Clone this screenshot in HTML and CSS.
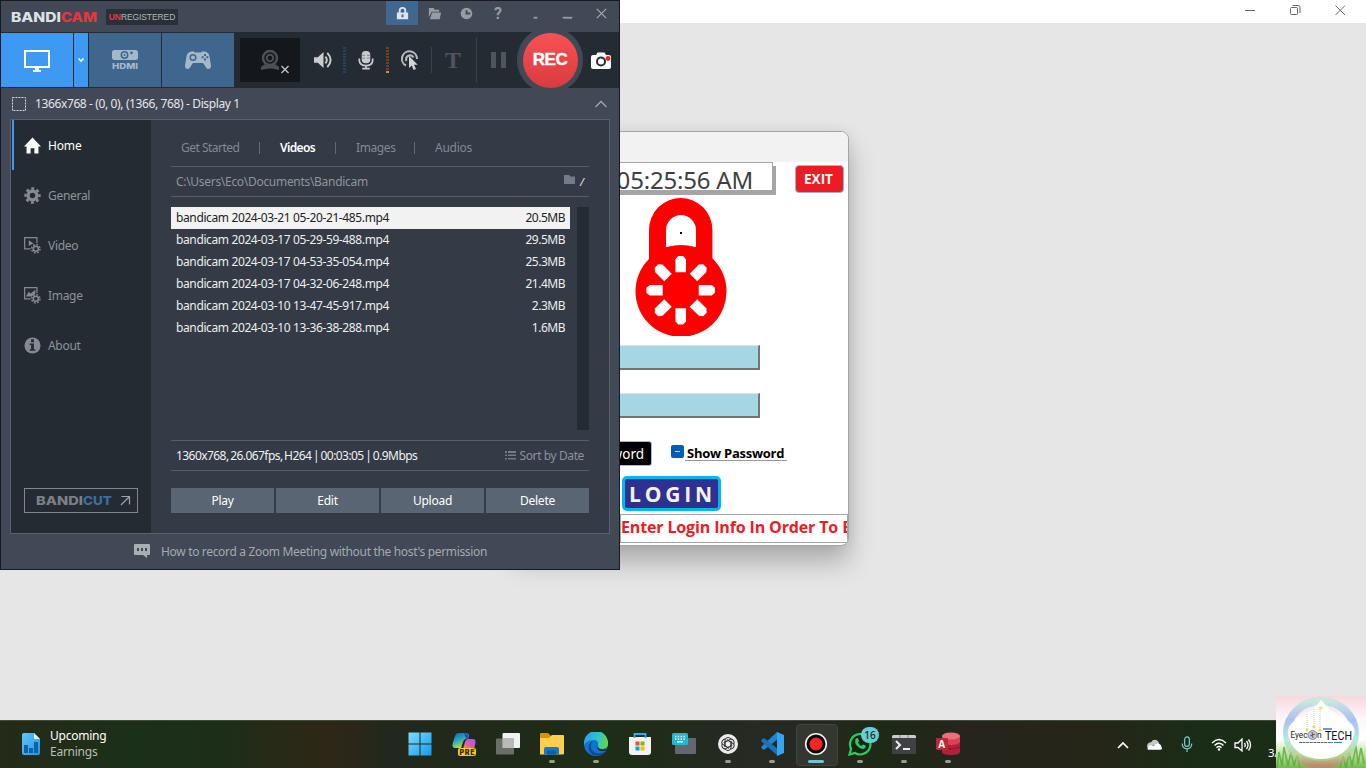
FILE: index.html
```html
<!DOCTYPE html>
<html lang="en">
<head>
<meta charset="utf-8">
<title>Desktop</title>
<link rel="stylesheet" href="styles.css">
</head>
<body>
<div class="desktop">
  <header class="app-bar">
    <svg class="app-ctl" viewBox="0 0 16 16"><path d="M3 8.500h10"/></svg>
    <svg class="app-ctl" viewBox="0 0 16 16"><rect x="3.500" y="5.500" width="7" height="7" rx="1"/><path d="M5.500 3.500h5.500a2 2 0 0 1 2 2v5.500"/></svg>
    <svg class="app-ctl" viewBox="0 0 16 16"><path d="M3.500 3.500l9.500 9.500M13 3.500L3.500 13"/></svg>
  </header>
  <main class="workspace"></main>

  <section class="login">
    <div class="login-title"></div>
    <div class="login-top">
      <div class="clock">05:25:56 AM</div>
      <button class="exit">EXIT</button>
    </div>
    <svg class="padlock" viewBox="0 0 92 138">
      <path fill="red" fill-rule="evenodd" d="M14 75V32a31.700 32 0 0 1 63.400 0V75zM31 49.500V32.500a15 15.500 0 0 1 30 0V49.500Q46 45 31 49.500z"/>
      <path fill="red" d="M31 49.300Q46 45 61 49.300L78 61A45.500 45.500 0 1 1 14 61z"/>
      <g fill="#fff" transform="translate(45.700 92.200)">
        <path id="s" d="M-5.300-18V-31L-2.500-34.300H2.500L5.300-31V-18z"/>
        <use href="#s" transform="rotate(45)"/><use href="#s" transform="rotate(90)"/><use href="#s" transform="rotate(135)"/><use href="#s" transform="rotate(180)"/><use href="#s" transform="rotate(225)"/><use href="#s" transform="rotate(270)"/><use href="#s" transform="rotate(315)"/>
      </g>
      <rect x="45" y="34" width="2" height="2" fill="#000"/>
    </svg>
    <div class="field"></div>
    <div class="field field-b"></div>
    <div class="login-opts">
      <button class="forgot">word</button>
      <span class="check"></span>
      <span class="show">Show Password</span>
    </div>
    <button class="login-btn">LOGIN</button>
    <div class="marquee">Enter Login Info In Order To E</div>
  </section>

  <section class="bandi">
    <div class="b-title">
      <svg class="b-logo" viewBox="0 0 88 16"><text x="0" y="14" textLength="50" lengthAdjust="spacingAndGlyphs" fill="#dfe2e4">BANDI</text><text x="50" y="14" textLength="36" lengthAdjust="spacingAndGlyphs" fill="#e8373c">CAM</text></svg>
      <span class="unreg"><b>UN</b>REGISTERED</span>
      <div class="b-ctls">
        <span class="b-ctl on"><svg viewBox="0 0 16 16"><path fill="#dce4ec" fill-rule="evenodd" d="M2 7h2V5a4 4 0 0 1 8 0v2h2v7H2zM6 7h4V5a2 2 0 0 0-4 0zM7 9v3h2V9z"/></svg></span>
        <span class="b-ctl"><svg viewBox="0 0 16 16"><path d="M2 12V2h5l1.500 2H13v2H5zM5.500 7H15l-1.500 7H3z"/></svg></span>
        <span class="b-ctl"><svg viewBox="0 0 16 16"><circle cx="8" cy="8" r="6.200"/><path d="M8 4.500V8h4" fill="none" stroke="#404955" stroke-width="2"/></svg></span>
        <span class="b-ctl help">?</span>
        <span class="b-ctl dot"><svg viewBox="0 0 16 16"><path d="M6 11.500h4v2H6z"/></svg></span>
        <span class="b-ctl"><svg viewBox="0 0 16 16"><path d="M3 11.500h10v2H3z"/></svg></span>
        <span class="b-ctl close"><svg viewBox="0 0 16 16"><path d="M3 3l10 10M13 3L3 13" fill="none" stroke="#a4a9af" stroke-width="1.300"/></svg></span>
      </div>
    </div>

    <div class="b-tools">
      <div class="mode active"><svg width="28" height="24" viewBox="0 0 28 24"><path fill="none" stroke="#fff" stroke-width="2" d="M2 3h24v16H2z"/><path fill="#fff" d="M12 20h4v2h2v2h-8v-2h2z"/></svg></div>
      <div class="mode drop"><svg width="8" height="8" viewBox="0 0 8 8"><path d="M1.500 2.500L4 5l2.500-2.500" fill="none" stroke="#fff" stroke-width="1.600"/></svg></div>
      <div class="mode"><svg width="28" height="20" viewBox="0 0 28 20"><rect x="1" y="0" width="26" height="10" rx="2.500" fill="#a5b8ca"/><circle cx="13.500" cy="5" r="3.200" fill="#a5b8ca" stroke="#3f668d" stroke-width="1.500"/><circle cx="13.500" cy="5" r="1" fill="#3f668d"/><circle cx="20.500" cy="2.800" r="1.400" fill="#3f668d"/><text class="hdmi" x="1" y="18.500" textLength="26" lengthAdjust="spacingAndGlyphs">HDMI</text></svg></div>
      <div class="mode"><svg width="28" height="20" viewBox="0 0 28 20"><path fill="#a5b8ca" d="M7 1.500h3l1 1h6l1-1h3q4 1 4.500 5l1.500 9q0 3.500-3 3.500-1.500 0-3.500-4l-1.500-2H9l-1.500 2q-2 4-3.500 4-3 0-3-3.500l1.500-9q.5-4 4.500-5z"/><circle cx="9" cy="7.500" r="2.800" fill="none" stroke="#3f668d" stroke-width="1.500"/><path fill="#3f668d" d="M20 4h2v2h-2zM20 8.500h2v2h-2zM17.700 6.200h2v2h-2zM22.300 6.200h2v2h-2z"/></svg></div>
      <div class="cam"><svg width="60" height="44" viewBox="0 0 60 44"><g fill="none" stroke="#4d5155"><circle cx="30" cy="20" r="7" stroke-width="2.500"/><circle cx="30" cy="20" r="3.200" stroke-width="2"/></g><path fill="#4d5155" d="M25 26q5 3 10 0l4 3v3q-9-3-18 0v-3z"/><path d="M41.500 28l7 7M48.500 28l-7 7" stroke="#c4c6c8" stroke-width="1.300"/></svg></div>
      <svg class="t-speaker" viewBox="0 0 20 18"><path fill="#c9cccf" d="M0 6h4l6-5.500v17L4 12H0z"/><path d="M12 5.500q3 3.500 0 7M14 1.500q7 7.500 0 15" fill="none" stroke="#c9cccf" stroke-width="2"/></svg>
      <span class="meter"></span>
      <svg class="t-mic" viewBox="0 0 16 20"><rect x="3.500" y="0" width="9" height="13" rx="4" fill="#c9cccf"/><path d="M4 4.500h3M9 4.500h3M4 7.500h3M9 7.500h3" stroke="#7b8086"/><path d="M1 8v2.500q1 5 7 5t7-5V8M8 15v3M4 18.500h8" fill="none" stroke="#c9cccf" stroke-width="1.800"/></svg>
      <span class="meter orange"></span>
      <svg class="t-click" viewBox="0 0 18 20"><path d="M5 15.500A7.500 7.500 0 1 1 16 9M5.500 11A3.800 3.800 0 1 1 12.500 7.500" fill="none" stroke="#b7babd" stroke-width="2.100"/><path fill="#d2d4d6" d="M8 6v12l2.700-2.500 2 4.500 2.300-1-2-4.300h3.700z"/></svg>
      <span class="sep short"></span>
      <span class="big-t">T</span>
      <span class="sep"></span>
      <span class="pause"></span>
      <span class="rec-wrap"><button class="rec">REC</button></span>
      <svg class="t-shot" viewBox="0 0 20 17"><path fill="#fff" fill-rule="evenodd" d="M2 3h3l1.500-2.500h7L15 3h3q2 0 2 2v10q0 2-2 2H2q-2 0-2-2V5q0-2 2-2z"/><circle cx="10" cy="9.500" r="4" fill="none" stroke="#252b32" stroke-width="2"/><circle cx="17" cy="6.500" r="2.400" fill="#ed2024"/></svg>
    </div>

    <div class="b-display">
      <svg class="dash-box" viewBox="0 0 14 14"><rect x=".5" y=".5" width="13" height="13"/></svg><span class="disp-text">1366x768 - (0, 0), (1366, 768) - Display 1</span>
      <svg class="up" viewBox="0 0 12 8"><path d="M.5 7L6 1.500 11.500 7" fill="none" stroke="#a2a8ae" stroke-width="1.300"/></svg>
    </div>

    <div class="b-panel">
      <nav class="side">
        <a class="nav sel"><svg viewBox="0 0 18 18"><path fill="#fff" d="M9 .5L18 10h-2.700v7.500H11V12H7v5.500H2.700V10H0z"/></svg>Home</a>
        <a class="nav"><svg viewBox="0 0 18 18"><circle cx="9" cy="9" r="4.700" fill="none" stroke="#858a90" stroke-width="3.600"/><circle cx="9" cy="9" r="7.400" fill="none" stroke="#858a90" stroke-width="2.500" stroke-dasharray="3.200 2.610" stroke-dashoffset="1.600"/></svg>General</a>
        <a class="nav"><svg viewBox="0 0 18 18"><path d="M7 12.500H.7V.7h13v6" fill="none" stroke="#858a90" stroke-width="1.300"/><path d="M5 3.500l5 3-5 3z" fill="#858a90"/><circle cx="12.500" cy="12.500" r="2.700" fill="none" stroke="#858a90" stroke-width="1.600"/><circle cx="12.500" cy="12.500" r="4.400" fill="none" stroke="#858a90" stroke-width="1.600" stroke-dasharray="1.800 1.656"/></svg>Video</a>
        <a class="nav"><svg viewBox="0 0 18 18"><path d="M7 12.500H.7V.7h13v6" fill="none" stroke="#858a90" stroke-width="1.300"/><path d="M2 10l3-5 2 2 5-4v4L8 10z" fill="#858a90"/><circle cx="12.500" cy="12.500" r="2.700" fill="none" stroke="#858a90" stroke-width="1.600"/><circle cx="12.500" cy="12.500" r="4.400" fill="none" stroke="#858a90" stroke-width="1.600" stroke-dasharray="1.800 1.656"/></svg>Image</a>
        <a class="nav"><svg viewBox="0 0 18 18"><circle cx="9" cy="9" r="8.500" fill="#858a90"/><path fill="#252b32" d="M7.500 2.500h3v3h-3zM6 7h4.500v6H12v1.500H6V13h1.500V8.500H6z"/></svg>About</a>
        <div class="cut"><svg width="112" height="23" viewBox="0 0 112 23"><text x="11" y="16" textLength="47" lengthAdjust="spacingAndGlyphs" fill="#7c8085">BANDI</text><text x="58" y="16" textLength="29" lengthAdjust="spacingAndGlyphs" fill="#3b6da3">CUT</text><path d="M96.500 7.500h8v8M104.500 7.500l-8.500 8.500" fill="none" stroke="#a1a4a7" stroke-width="1.200"/></svg></div>
      </nav>
      <div class="content">
        <div class="tabs"><span class="tab t1">Get Started</span><i></i><span class="tab t2">Videos</span><i></i><span class="tab t3">Images</span><i></i><span class="tab t4">Audios</span></div>
        <div class="path"><span class="path-text">C:\Users\Eco\Documents\Bandicam</span><svg viewBox="0 0 12 10"><path fill="#757c86" d="M0 0h5l1.500 1.500H11V9H0z"/></svg><em>/</em></div>
        <div class="files">
          <div class="list">
            <div class="row picked"><span>bandicam 2024-03-21 05-20-21-485.mp4</span><span class="size">20.5MB</span></div>
            <div class="row"><span>bandicam 2024-03-17 05-29-59-488.mp4</span><span class="size">29.5MB</span></div>
            <div class="row"><span>bandicam 2024-03-17 04-53-35-054.mp4</span><span class="size">25.3MB</span></div>
            <div class="row"><span>bandicam 2024-03-17 04-32-06-248.mp4</span><span class="size">21.4MB</span></div>
            <div class="row"><span>bandicam 2024-03-10 13-47-45-917.mp4</span><span class="size">2.3MB</span></div>
            <div class="row"><span>bandicam 2024-03-10 13-36-38-288.mp4</span><span class="size">1.6MB</span></div>
          </div>
          <div class="scroll"></div>
        </div>
        <div class="info"><span class="info-text">1360x768, 26.067fps, H264 | 00:03:05 | 0.9Mbps</span><span class="sort"><svg viewBox="0 0 11 9"><path fill="#757c86" d="M0 0h2v2H0zM3 0h8v2H3zM0 3.500h2v1.500H0zM3 3.500h8v1.500H3zM0 7h2v1.500H0zM3 7h8v1.500H3z"/></svg>Sort by Date</span></div>
        <div class="acts"><button>Play</button><button>Edit</button><button>Upload</button><button>Delete</button></div>
      </div>
    </div>

    <div class="b-foot"><svg viewBox="0 0 16 14"><path fill="#a9aeb4" fill-rule="evenodd" d="M1 0h14q1 0 1 1v9q0 1-1 1h-2v3l-4-3H1q-1 0-1-1V1q0-1 1-1zM3 4v3h2V4zM7 4v3h2V4zM11 4v3h2V4z"/></svg><span>How to record a Zoom Meeting without the host's permission</span></div>
  </section>

  <footer class="taskbar">
    <div class="widget">
      <svg width="18" height="22" viewBox="0 0 18 22"><defs><linearGradient id="wg" x1="0" y1="0" x2="1" y2="1"><stop offset="0" stop-color="#63c4f7"/><stop offset="1" stop-color="#2494e2"/></linearGradient></defs><path fill="url(#wg)" d="M2 0h10l6 6v14q0 2-2 2H2q-2 0-2-2V2q0-2 2-2z"/><path fill="#d5f1ff" d="M12 0l6 6h-6z"/><path fill="#0c62ad" d="M2 12h4v8H2zM7 15h4v5H7zM12 9h4v11h-4z"/></svg>
      <div class="w-text"><span>Upcoming</span><span class="dim">Earnings</span></div>
    </div>
    <div class="apps">
      <span class="app"><svg viewBox="0 0 24 24"><defs><linearGradient id="w" x1="0" y1="0" x2="1" y2="1"><stop offset="0" stop-color="#7fdcfb"/><stop offset="1" stop-color="#129ae9"/></linearGradient></defs><path fill="url(#w)" d="M.5.500h11v11H.500zM12.500.500h11v11h-11zM.500 12.500h11v11H.500zM12.500 12.500h11v11h-11z"/></svg></span>
      <span class="app"><svg viewBox="0 0 24 24"><defs><linearGradient id="c1" x1="0" y1="0" x2=".4" y2="1"><stop stop-color="#1a59bd"/><stop offset=".5" stop-color="#25a6bb"/><stop offset="1" stop-color="#b7dc3d"/></linearGradient><linearGradient id="c2" x1="1" y1="0" x2="0" y2="1"><stop stop-color="#9e55f3"/><stop offset=".5" stop-color="#e65da9"/><stop offset="1" stop-color="#ff9c51"/></linearGradient></defs><path fill="url(#c1)" d="M6 1h8q3 0 3 3l-1 3h-2q-2 0-3 3l-2 6H3q-3 0-2.500-4L3 4q1-3 3-3z"/><path fill="url(#c2)" d="M16 7h5q3 0 2.500 4L22 17q-1 4-4 4h-5q-3 0-2-4l2-7q1-3 3-3z"/><path fill="#1954b7" d="M12 1q5 0 5 6h-3z"/><rect x="6" y="16" width="18" height="8" rx="2" fill="#ffc916"/><text x="7.500" y="22.500" class="pre" textLength="15">PRE</text></svg></span>
      <span class="app"><svg viewBox="0 0 24 24"><rect x="6.500" y="1" width="17.500" height="15" rx="1" fill="#f1f1f1"/><rect x="0" y="6.500" width="18" height="16" rx="1" fill="#777a76" opacity=".85"/><path fill="#b9bab8" d="M6.500 6.500H18V16H6.500z"/></svg></span>
      <span class="app run"><svg viewBox="0 0 24 24"><path fill="#da940c" d="M0 2q0-1 1-1h7l3 3v5H0z"/><path fill="#ffcf4b" d="M0 6h9l3-3h11q1 0 1 1v17.500q0 1-1 1H0z"/><path fill="#1579ce" d="M4 17q0-2 2-2h11q2 0 2 2v5.500H4z"/><path fill="#0b5dab" d="M7 18.500h9v4H7z"/></svg></span>
      <span class="app run"><svg viewBox="0 0 24 24"><defs><linearGradient id="e1" x1="0" y1=".3" x2="1" y2=".5"><stop stop-color="#269fe5"/><stop offset=".6" stop-color="#33c4ca"/><stop offset="1" stop-color="#67d744"/></linearGradient></defs><circle cx="12" cy="12" r="12" fill="#1274cf"/><path fill="url(#e1)" d="M0 11A12 12 0 0 1 24 11q.5 5-5 6-5 0-5-3 1-6-4-6-7 0-10 5z"/><path fill="#104c9c" d="M9 9q-4 4-1 9 3 5 13 2-5 5-12 3-6-4-4-10 1-3 4-4z"/><path fill="#20291a" d="M14 14.500q0 3 5 3 3 0 4-1.500l-1 2.500q-5 2-8-1-1-1.500 0-3z"/></svg></span>
      <span class="app"><svg viewBox="0 0 24 24"><path fill="#f2f2f2" d="M1 5h22v15q0 3-3 3H4q-3 0-3-3z"/><path fill="none" stroke="#29aee8" stroke-width="1.800" d="M6.500 6V2h11v4"/><path fill="#f25022" d="M7.500 9.500h4v4h-4z"/><path fill="#7fba00" d="M12.500 9.500h4v4h-4z"/><path fill="#00a4ef" d="M7.500 14.500h4v4h-4z"/><path fill="#ffb900" d="M12.500 14.500h4v4h-4z"/></svg></span>
      <span class="app"><svg viewBox="0 0 24 24"><rect x="3" y="6" width="21" height="16" rx="1" fill="#616870"/><rect x="0" y="1" width="16" height="12" rx="1.500" fill="#21b7d5"/><path d="M3 4.500h10M3 7h10" stroke="#e5ffff" stroke-width="1.400" stroke-dasharray="1.400 1.400"/><path d="M5 9.800h6" stroke="#fff" stroke-width="1.400"/></svg></span>
      <span class="app run"><svg viewBox="0 0 24 24"><circle cx="12" cy="12" r="10" fill="#ececec"/><g fill="none" stroke="#333" stroke-width="1"><path id="g" d="M9 14V8.500q0-3 3-3 2 0 3 1.500M9 14l4 2.300"/><use href="#g" transform="rotate(60 12 12)"/><use href="#g" transform="rotate(120 12 12)"/><use href="#g" transform="rotate(180 12 12)"/><use href="#g" transform="rotate(240 12 12)"/><use href="#g" transform="rotate(300 12 12)"/></g></svg></span>
      <span class="app run"><svg viewBox="0 0 24 24"><path fill="#1f86cf" d="M17 0L2 14q-1 1-.5 2l1.500 1.500q1 .5 2-.2L18 7z"/><path fill="#1673b7" d="M18 24L2 10Q.500 9 1.500 8L3 6.500q1-.7 2 .2L18 17z"/><path fill="#35a5ed" d="M17 0l7 3v18l-7 3z"/></svg></span>
      <span class="app current"><svg viewBox="0 0 24 24"><circle cx="12" cy="12" r="10.300" fill="#0b0809" stroke="#f2f2f2" stroke-width="1.600"/><circle cx="12" cy="12" r="6.500" fill="#f52520"/></svg></span>
      <span class="app run"><svg viewBox="0 0 24 24"><path fill="#182617" stroke="#29ce60" stroke-width="2.200" d="M1.500 22.500l1.600-5.700A10.200 10.200 0 1 1 7 21z"/><path fill="#29ce60" d="M7.500 7q2-2 3 .500l.5 1.500-1 1.500q1 2.500 3.500 3.500l1.500-1.500 2.500 1q1 1-.5 2.500-2 2-6-.5-5-3-3.500-8.500z"/></svg><b class="badge">16</b></span>
      <span class="app run"><svg viewBox="0 0 24 24"><rect y="3" width="24" height="19" rx="1.500" fill="#3f4142"/><path fill="#c9cbcc" d="M1.500 3h21q1.500 0 1.500 1.500V6H0V4.500Q0 3 1.500 3z"/><path d="M8 3v3M16 3v3" stroke="#888"/><path d="M4 9l4 4-4 4M11 17h7" fill="none" stroke="#eee" stroke-width="2"/></svg></span>
      <span class="app run"><svg viewBox="0 0 24 24"><path fill="#b61f39" d="M6 4h18v16q0 3-9 3t-9-3z"/><path fill="#d84256" d="M6 4h18v6q-2 3-9 3T6 10z"/><path d="M6 15q9 4 18 0" stroke="#8e1228" fill="none"/><ellipse cx="15" cy="4" rx="9" ry="3.500" fill="#e9707d"/><rect y="6" width="12" height="12" rx="1" fill="#bb2638"/><text x="2.300" y="15.500" class="acc">A</text></svg></span>
    </div>
    <div class="tray">
      <svg class="tr-chev" viewBox="0 0 12 8"><path d="M1 7l5-5 5 5"/></svg>
      <svg class="tr-cloud" viewBox="0 0 18 12"><path fill="#c4c8c2" d="M1 8Q1 3 5.500 3 7 0 10 .500 13 1 14 5z"/><path fill="#fff" d="M2 11q-1.500-3 2-4.500 2-.5 4 .5 4-4 7-1.500 1.500 1 1 2Q18 9 16 11z"/></svg>
      <svg class="tr-mic" viewBox="0 0 12 18"><rect x="3.500" y="1" width="5" height="10" rx="2.500"/><path d="M1 8q0 5.500 5 5.500T11 8M6 13.500V17"/></svg>
      <svg class="tr-wifi" viewBox="0 0 16 13"><path d="M1 5q7-7 14 0M3.500 7.500q4.500-4.500 9 0M5.500 9.700q2.500-2.500 5 0"/><circle cx="8" cy="11.500" r="1.200" fill="#fff" stroke="none"/></svg>
      <svg class="tr-vol" viewBox="0 0 18 14"><path d="M1 5h3l4-4v12L4 9.500H1zM10.500 5q1.500 2 0 4M12.500 3q3 4 0 8M14.500 1.500q4 5.500 0 11"/></svg>
      <span class="date">3/</span>
    </div>
  </footer>

  <svg class="eyecon" viewBox="0 0 90 72">
    <defs>
      <linearGradient id="bgp" x1="0" y1="0" x2="0" y2="1"><stop stop-color="#f6d9df"/><stop offset=".3" stop-color="#fff5f6"/><stop offset=".6" stop-color="#fff"/><stop offset=".85" stop-color="#b4da90"/><stop offset="1" stop-color="#74b751"/></linearGradient>
      <linearGradient id="ring" x1="0" y1="0" x2="0" y2="1"><stop stop-color="#b4ebdc"/><stop offset=".3" stop-color="#86a9ee"/><stop offset=".6" stop-color="#93e2d5"/><stop offset=".85" stop-color="#b5cf93"/><stop offset="1" stop-color="#d07a72"/></linearGradient>
    </defs>
    <path fill="url(#bgp)" d="M0 0h90v72H0z"/>
    <path d="M1 72l2-16 3 14 2-19 4 19 3-14 3 14 3-11 3 13M64 72l3-12 3 12 3-15 3 13 4-20 2 18 3-16 3 16" fill="none" stroke="#57ac35" stroke-width="1.600" opacity=".8"/>
    <ellipse cx="45" cy="37" rx="34" ry="32" fill="none" stroke="url(#ring)" stroke-width="8" opacity=".7"/>
    <path fill="#fff" d="M45 4q8 10 22 18 16 8 10 20-6 20-32 21-26-1-32-21-5-12 10-20Q37 15 45 4z"/>
    <path d="M31 18v16M38 13v18M44 11v23" stroke="#c9c795" stroke-dasharray="1 1"/>
    <g fill="#edda38"><circle cx="31" cy="34" r="1.500"/><circle cx="38" cy="31" r="1.500"/><circle cx="44" cy="34" r="1.500"/><circle cx="45" cy="12" r="2" opacity=".5"/></g>
    <circle cx="36.500" cy="39" r="4.500" fill="#c9c3cf" stroke="#778eb5"/><path d="M34 40l5-2M36 36l1 6" stroke="#7a5055"/>
    <text x="14.500" y="42" class="ey" textLength="17" lengthAdjust="spacingAndGlyphs">Eyec</text><text x="41" y="42" class="ey">n</text>
    <text x="49" y="43.500" class="tech" textLength="27" lengthAdjust="spacingAndGlyphs">TECH</text>
    <path d="M47 33h9" stroke="#7d92dc" stroke-width="2"/><path d="M23 46.500h34" stroke="#666" stroke-width="1" stroke-dasharray="3 .6"/><path d="M58 46.500h8" stroke="#338bc0" stroke-width="1.200"/>
  </svg>
</div>
</body>
</html>
```

FILE: styles.css
```css
* { box-sizing: border-box; }
body { margin: 0; font-family: "Noto Sans", "Open Sans", sans-serif; font-size: 12px; }
button { font: inherit; border: 0; padding: 0; margin: 0; color: inherit; }
svg { display: block; flex: none; }

.desktop { position: relative; width: 1366px; height: 768px; overflow: hidden; display: flex; flex-direction: column; background: #e6e6e6; }
.app-bar { height: 23px; background: #fff; display: flex; justify-content: flex-end; gap: 29px; padding: 2px 18px 0 0; }
.app-ctl { width: 16px; height: 16px; fill: none; stroke: #666; stroke-width: 1; }
.workspace { flex: 1; }

/* Login window */
.login { position: absolute; left: 513px; top: 131px; width: 336px; height: 415px; border: 1px solid #a5a5a5; border-radius: 8px; background: #fff; overflow: hidden; box-shadow: 0 16px 26px rgba(0,0,0,.25), 0 0 14px rgba(0,0,0,.06); display: flex; flex-direction: column; align-items: flex-end; }
.login-title { height: 30px; width: 100%; background: #f2f2f2; flex: none; }
.login-top { display: flex; align-items: flex-start; gap: 22px; padding-right: 4px; height: 36px; flex: none; }
.clock { width: 190px; height: 29px; border: 1px solid #a5a5a5; box-shadow: 3px 4px 0 #a5a5a5; text-align: right; padding-right: 19px; font-size: 24px; line-height: 34px; color: #3f3f3f; letter-spacing: -.2px; }
.exit { width: 49px; height: 28px; margin-top: 3px; background: #ed1c24; border: 1px solid #9ab2dc; border-radius: 4px; color: #fff; font: bold 13.500px/24px "Open Sans", sans-serif; padding-right: 2px; }
.padlock { width: 92px; height: 138px; margin-right: 121px; }
.field { width: 200px; height: 25px; margin: 9px 88px 0 0; background: #a5d6e3; border: 2px solid #747474; border-width: 1px 2px 2px 1px; border-top-color: #e3e3e3; flex: none; }
.field-b { margin-top: 23px; }
.login-opts { display: flex; align-items: flex-start; height: 25px; margin: 23px 61px 0 0; flex: none; }
.forgot { width: 80px; height: 25px; background: #000; border: 1px solid #9bbce4; border-radius: 3px; color: #fff; font-size: 13.500px; line-height: 22px; text-align: right; padding-right: 7px; }
.check { width: 13px; height: 13px; margin: 4px 1px 0 19px; background: #005fb8; border-radius: 2px; display: grid; place-items: center; }
.check::before { content: ""; width: 5px; height: 1px; background: #cde; }
.show { width: 102px; height: 20px; border-bottom: 1px solid #999; font: bold 13px/25px "Open Sans", sans-serif; letter-spacing: -.25px; padding-left: 2px; color: #000; white-space: nowrap; }
.login-btn { width: 99px; height: 35px; margin: 10px 127px 0 0; background: #2e3192; border: 3px solid #00b7ef; border-radius: 5px; color: #f5f1e6; font: bold 21px/28px "Open Sans", sans-serif; letter-spacing: 3.800px; padding-left: 2px; flex: none; }
.marquee { width: 228px; height: 29px; margin-top: 3px; border: 1px solid #a5a5a5; color: #ed1c24; font: bold 16px/25px "Open Sans", sans-serif; letter-spacing: -.14px; white-space: nowrap; overflow: hidden; flex: none; }

/* Recorder window */
.bandi { position: absolute; left: 0; top: 0; width: 620px; height: 570px; background: #404955; border: 1px solid #171b21; display: flex; flex-direction: column; }
.b-title { height: 31px; display: flex; align-items: flex-start; flex: none; }
.b-logo { width: 88px; height: 16px; margin: 7px 0 0 10px; font: 800 13.500px Inter, sans-serif; }
.unreg { margin: 8px 0 0 7px; width: 72px; height: 16px; background: #2a3037; color: #b3b6b9; font: 8.500px/16px "Liberation Sans", sans-serif; text-align: center; letter-spacing: -.1px; }
.unreg b { color: #e8373c; }
.b-ctls { display: flex; margin-left: auto; margin-right: 2px; }
.b-ctl { width: 32px; height: 24px; display: grid; place-items: center; fill: #969ca3; color: #969ca3; }
.b-ctl svg { width: 15px; height: 15px; }
.b-ctl.on { background: #3f6790; }
.b-ctl.dot { margin-left: 5px; }
.b-ctl.close { margin-left: 2px; }
.help { font: bold 16px Roboto, sans-serif; }

.b-tools { height: 56px; background: #252b32; display: flex; align-items: center; flex: none; }
.mode { width: 72px; height: 54px; margin-right: 1px; background: #3f668d; display: grid; place-items: center; }
.mode.active, .mode.drop { background: #3d99f1; }
.mode.drop { width: 14px; }
.hdmi { font: 800 8px Inter, sans-serif; fill: #a5b8ca; }
.cam { width: 60px; height: 44px; margin-left: 5px; background: #14171b; }
.t-speaker { width: 19px; height: 18px; margin-left: 14px; }
.meter { width: 3px; height: 26px; margin-left: 10px; background: repeating-linear-gradient(#24435f 0 2px, #252b32 2px 3px); }
.t-mic { width: 16px; height: 19px; margin-left: 12px; }
.meter.orange { margin-left: 12px; background: linear-gradient(transparent 24px, #f58524 24px), repeating-linear-gradient(#72411c 0 2px, #252b32 2px 3px); }
.t-click { width: 18px; height: 20px; margin-left: 12px; }
.sep { width: 1px; height: 44px; background: #3b424b; margin-left: 14px; }
.sep.short { height: 26px; margin-left: 12px; }
.big-t { margin-left: 13px; width: 17px; font: bold 24px "Liberation Serif", serif; color: #4f555c; }
.pause { width: 15px; height: 16px; margin-left: 14px; border: solid #4f555c; border-width: 0 5px; }
.rec-wrap { width: 66px; height: 56px; margin-left: 11px; background: radial-gradient(circle at 33px 28px, #404955 32.500px, transparent 33.500px); display: grid; place-items: center; }
.rec { width: 55px; height: 55px; border-radius: 50%; background: linear-gradient(#f95155, #d83b3e); color: #fff; font: bold 17px/54px "Liberation Sans", sans-serif; letter-spacing: -.5px; -webkit-text-stroke: .4px #fff; }
.t-shot { width: 20px; height: 17px; margin-left: 8px; }

.b-display { height: 31px; display: flex; align-items: center; padding-left: 11px; color: #e5e7e9; flex: none; }
.dash-box { width: 14px; height: 14px; margin-right: 9px; fill: none; stroke: #d5d7d9; stroke-dasharray: 2 1; }
.disp-text { letter-spacing: -.38px; }
.up { width: 12px; height: 8px; margin: 0 12px 0 auto; }

.b-panel { height: 415px; margin: 0 9px; border: 1px solid #59616d; display: flex; background: #343a46; flex: none; }
.side { width: 140px; background: #252b32; display: flex; flex-direction: column; }
.nav { height: 50px; margin-left: 1px; border-left: 2px solid transparent; padding-left: 10px; display: flex; align-items: center; color: #8e9399; letter-spacing: -.3px; }
.nav svg { width: 17px; height: 17px; margin-right: 7px; }
.nav.sel { color: #fff; border-color: #3d99f1; letter-spacing: -.15px; }
.cut { width: 114px; height: 25px; margin: auto 0 20px 13px; border: 1px solid #84878a; font: 800 12px Inter, sans-serif; }
.content { width: 438px; padding: 0 0 0 20px; }
.content > * { width: 418px; }
.tabs { height: 46px; padding: 9px 0 0 10px; display: flex; align-items: center; color: #838993; }
.tab { letter-spacing: -.25px; white-space: nowrap; }
.tabs i { width: 1px; height: 12px; background: #626a76; }
.tab.t1 { width: 78px; letter-spacing: -.52px; }
.tab.t2 { width: 55px; margin-left: 20px; color: #fff; font-weight: 600; letter-spacing: -.65px; }
.t3 { width: 58px; margin-left: 20px; }
.tab.t3 { letter-spacing: -.4px; }
.t4 { margin-left: 20px; }
.path { height: 31px; border: solid #565e69; border-width: 1px 0; display: flex; align-items: center; padding: 0 5px; color: #8e959c; }
.path-text { margin-right: auto; letter-spacing: -.3px; }
.path svg { width: 12px; height: 10px; margin: 0 4px 3px 0; }
.path em { color: #e5e5e5; font-size: 11px; }
.files { height: 243px; display: flex; justify-content: space-between; padding: 10px 0; }
.list { width: 399px; }
.row { height: 22px; padding: 0 5px 2px; display: flex; justify-content: space-between; align-items: center; color: #eceef0; letter-spacing: -.38px; }
.size { letter-spacing: -.5px; }
.row.picked { background: #f2f2f2; color: #222; }
.scroll { width: 12px; height: 223px; background: #252b32; }
.info { height: 31px; border: solid #565e69; border-width: 1px 0; display: flex; align-items: center; justify-content: space-between; padding: 0 5px; color: #f0f1f2; }
.info-text { letter-spacing: -.56px; word-spacing: -1px; }
.sort { display: flex; align-items: center; gap: 4px; color: #8b929b; letter-spacing: -.4px; }
.sort svg { width: 11px; height: 9px; }
.acts { height: 25px; margin-top: 17px; display: grid; grid-template-columns: repeat(4, 1fr); gap: 2px; color: #fff; }
.acts button { background: #596572; letter-spacing: -.25px; }
.b-foot { flex: 1; display: flex; align-items: center; padding: 0 0 1px 133px; color: #a4aab0; }
.b-foot svg { width: 16px; height: 14px; margin-right: 11px; }
.b-foot span { letter-spacing: -.33px; }

/* Taskbar */
.taskbar { height: 48px; display: flex; align-items: center; color: #fff; border-top: 1px solid #3f4a3a; background: linear-gradient(90deg, #242b18 0, #1b3018 140px, #1d2e18 220px, #2d2716 315px, #2b2718 350px, #23281d 380px, #20291a 450px, #1e2d18 630px, #272923 750px, #252720 830px, #1d2a17 870px, #26251d 970px, #252618 1100px, #1a2d16 1200px, #1a2c16); }
.widget { width: 398px; padding: 0 0 2px 22px; display: flex; align-items: center; gap: 10px; }
.w-text { display: flex; flex-direction: column; line-height: 16px; letter-spacing: -.25px; }
.dim { color: #b9bfb5; }
.apps { display: flex; height: 47px; }
.app { position: relative; width: 44px; height: 46px; padding-top: 11px; display: flex; justify-content: center; align-items: flex-start; }
.app svg { width: 24px; height: 24px; }
.app.run::after, .app.current::after { content: ""; position: absolute; bottom: 4px; width: 6px; height: 3px; border-radius: 2px; background: #989c93; }
.app.current::after { width: 16px; background: #69c9d2; }
.app.current::before { content: ""; position: absolute; left: 2px; top: 3px; width: 40px; height: 40px; border: 1px solid #42443e; border-radius: 4px; background: #343630; }
.app.current svg { position: relative; }
.badge { position: absolute; right: 3px; top: 6px; width: 18px; height: 16px; border-radius: 9px; background: #69cdd2; color: #102a2b; font-size: 10px; font-weight: 500; line-height: 16px; text-align: center; }
.pre { font: 900 7px Inter, sans-serif; fill: #332800; }
.acc { font: bold 10px "Open Sans", sans-serif; fill: #fff; }
.tray { flex: 1; height: 46px; display: flex; align-items: center; padding-left: 147px; }
.tray svg { fill: none; stroke: #fff; stroke-width: 1.300; }
.tray .tr-chev { width: 12px; height: 8px; stroke-width: 1.700; }
.tray .tr-cloud { width: 17px; height: 12px; margin-left: 17px; stroke: none; }
.tray .tr-mic { width: 12px; height: 17px; margin-left: 18px; stroke: #75c8ca; }
.tray .tr-wifi { width: 16px; height: 13px; margin-left: 18px; }
.tray .tr-vol { width: 18px; height: 14px; margin-left: 7px; }
.date { margin: 15px 0 0 16px; font-size: 11.500px; }

/* Channel watermark */
.eyecon { position: absolute; left: 1276px; top: 696px; width: 90px; height: 72px; }
.ey { font: 8.500px Roboto, sans-serif; fill: #222; }
.tech { font: 13px Roboto, sans-serif; fill: #111; }
```
